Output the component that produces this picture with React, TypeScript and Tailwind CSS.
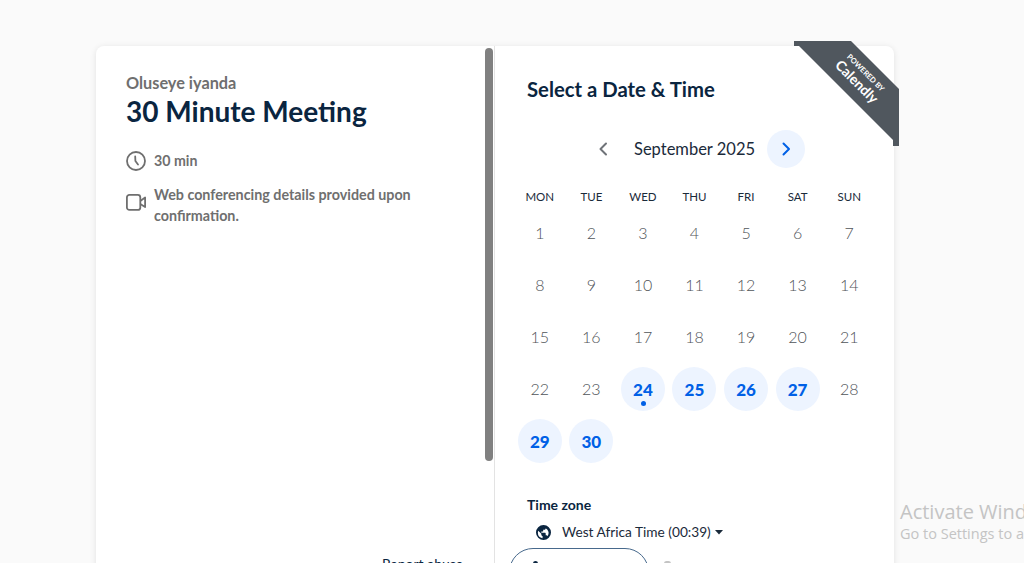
import React from "react";

const headers = ["MON", "TUE", "WED", "THU", "FRI", "SAT", "SUN"];
const available = [24, 25, 26, 27, 29, 30];
const days = Array.from({ length: 30 }, (_, i) => i + 1);

function Day({ d }: { d: number }) {
  const on = available.includes(d);
  return (
    <div className="flex h-[52px] items-center justify-center">
      <div
        className={
          on
            ? "relative flex h-11 w-11 items-center justify-center rounded-full bg-[#edf4ff] pt-[1px] text-[17px] font-black text-[#0060e6]"
            : "flex h-11 w-11 items-center justify-center pb-[1px] text-[16px] font-light text-[#505459]"
        }
      >
        {d}
        {d === 24 && <span className="absolute bottom-[5px] left-[20px] h-[5px] w-[5px] rounded-full bg-[#0060e6]" />}
      </div>
    </div>
  );
}

export default function App() {
  return (
    <div className="relative h-[563px] overflow-hidden bg-[#fafafa] font-['Lato','Liberation_Sans',sans-serif]">
      <div className="flex pt-[46px] pl-[96px]">
        <div className="relative flex h-[700px] w-[798px] rounded-lg bg-white shadow-[0_1px_6px_rgba(0,0,0,0.1)]">
          <section className="relative w-[399px] shrink-0 border-r border-[#e3e3e3] pt-[28px] pl-[30px]">
            <p className="text-[16.3px] leading-[18px] font-bold text-[#6f6f6f]">Oluseye iyanda</p>
            <h1 className="mt-[2px] text-[28px] leading-[34px] font-bold text-[#0a2540]">30 Minute Meeting</h1>
            <div className="mt-[23px] flex items-center gap-[8px] text-[#6f6f6f]">
              <svg width="20" height="20" viewBox="0 0 20 20" fill="none" stroke="currentColor" strokeWidth="1.8" strokeLinecap="round">
                <circle cx="10" cy="10" r="9" />
                <path d="M9.200 5.500 L9.400 10 L12 13.500" />
              </svg>
              <span className="text-[14.200px] leading-[20px] font-bold">30 min</span>
            </div>
            <div className="mt-[13px] flex items-start gap-[8px] text-[#6f6f6f]">
              <svg className="mt-[10px] shrink-0" width="20" height="17" viewBox="0 0 20 17" fill="none" stroke="currentColor" strokeWidth="1.8" strokeLinejoin="round">
                <rect x="0.900" y="0.900" width="13.400" height="15" rx="2.500" />
                <path d="M14.300 7 L19.100 3.500 V13 L14.300 10" />
              </svg>
              <p className="w-[290px] text-[14.300px] leading-[21px] font-bold">Web conferencing details provided upon confirmation.</p>
            </div>
            <a className="absolute top-[510px] left-[286px] text-[14px] leading-[16px] text-[#0a2540]">Report abuse</a>
            <div className="absolute top-[2px] right-[1px] h-[413px] w-2 rounded-[4px] bg-[#808080]" />
          </section>

          <section className="flex-1 pt-[31px]">
            <h2 className="pl-[32px] text-[20.300px] leading-[24px] font-bold text-[#0a2540]">Select a Date &amp; Time</h2>
            <div className="mt-[29px] flex h-[38px] items-center pl-[97px]">
              <svg width="22" height="22" viewBox="0 0 22 22" fill="none" stroke="#6f7378" strokeWidth="2" strokeLinecap="round" strokeLinejoin="round">
                <path d="M14 5.500 L8.500 11 L14 16.500" />
              </svg>
              <span className="ml-[20px] w-[133px] text-[16.500px] text-[#1a2a3a]">September 2025</span>
              <div className="flex h-[38px] w-[38px] items-center justify-center rounded-full bg-[#edf4ff]">
                <svg width="22" height="22" viewBox="0 0 22 22" fill="none" stroke="#0060e6" strokeWidth="2" strokeLinecap="round" strokeLinejoin="round">
                  <path d="M8.500 5.500 L14 11 L8.500 16.500" />
                </svg>
              </div>
            </div>
            <div className="mt-[21px] ml-[19px] grid w-[361px] grid-cols-7">
              {headers.map((h) => (
                <div key={h} className="text-center text-[11.500px] leading-[16px] text-[#1a2a3a]">{h}</div>
              ))}
            </div>
            <div className="mt-[2px] ml-[19px] grid w-[361px] grid-cols-7">
              {days.map((d) => (
                <Day key={d} d={d} />
              ))}
            </div>
            <div className="mt-[29px] pl-[32px] text-[14px] leading-[18px] font-bold text-[#0a2540]">Time zone</div>
            <div className="mt-[9px] flex items-center pl-[41px] text-[#1a2a3a]">
              <svg width="15" height="15" viewBox="0 0 24 24" fill="#0a2540">
                <path fillRule="evenodd" d="M12 0a12 12 0 1 0 0 24 12 12 0 0 0 0-24ZM3 12c0-1 .2-2 .5-3l5 5v1.500c0 1 1 2 2 2V21A9 9 0 0 1 3 12Zm15.500 6c-.3-1-1-1.500-2-1.500h-1v-3c0-.5-.5-1-1-1h-6v-2h2c.5 0 1-.5 1-1v-2h2c1 0 2-1 2-2v-.5A9 9 0 0 1 18.500 18Z" />
              </svg>
              <span className="ml-[11px] text-[13.700px] leading-[18px]">West Africa Time (00:39)</span>
              <svg className="ml-[4px]" width="8" height="5" viewBox="0 0 8 5" fill="#1a2a3a">
                <path d="M0 0 H8 L4 4.500 Z" />
              </svg>
            </div>
            <div className="relative mt-[7px] ml-[14px] h-12 w-[140px] rounded-3xl border border-[#47698c]">
              <span className="absolute top-[12px] left-[23px] h-[5px] w-[5px] rounded-full bg-[#0a2540]" />
              <span className="absolute top-[12px] left-[154px] h-[5px] w-[7px] rounded-full bg-[#c4c4c4]" />
            </div>
          </section>

          <svg className="absolute top-[-5px] left-[698px]" width="105" height="105" viewBox="0 0 105 105">
            <polygon points="0,0 57,0 105,48 105,105 99,105 99,99 5,5 0,5" fill="#50575e" />
          </svg>
          <div className="absolute top-[-5px] left-[698px] h-[105px] w-[105px]">
            <div className="absolute top-[26px] left-[26px] w-[80px] rotate-45 text-center text-white">
              <div className="text-[7.500px] leading-[8px] font-bold">POWERED BY</div>
              <div className="text-[14px] leading-[15px] font-bold">Calendly</div>
            </div>
          </div>
        </div>
      </div>
      <div className="absolute top-[499px] left-[900px] font-['Open_Sans',sans-serif] whitespace-nowrap text-[#c4c4c4]">
        <div className="text-[20px] leading-[25px]">Activate Windows</div>
        <div className="text-[14.500px] leading-[20px]">Go to Settings to activate Windows.</div>
      </div>
    </div>
  );
}
